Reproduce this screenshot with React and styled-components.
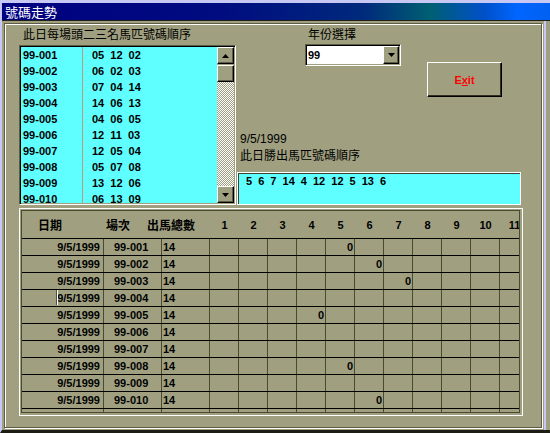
import React from 'react';
import styled, { createGlobalStyle } from 'styled-components';

const face = '#a0a080';
const cyan = '#60ffff';
const lavender = '#c8c8f4';
const shade = '#5c5c44';
const gridLine = '#4a4a30';

const GlobalStyle = createGlobalStyle`
  html, body { margin: 0; padding: 0; background: ${face}; }
  * { box-sizing: border-box; }
`;

const Window = styled.div`
  width: 550px;
  height: 433px;
  background: ${face};
  border-left: 2px solid ${lavender};
  border-top: 3px solid ${lavender};
  border-bottom: 3px solid #1c1c14;
  display: flex;
  flex-direction: column;
  overflow: hidden;
  font-family: "Liberation Sans", "Noto Sans CJK TC", sans-serif;
`;

const TitleBar = styled.div`
  height: 18px;
  flex-shrink: 0;
  border-bottom: 1px solid #202018;
  padding-left: 3px;
  color: #fff;
  font-family: "Noto Sans CJK TC", sans-serif;
  font-size: 13px;
  line-height: 17px;
  background: linear-gradient(90deg, #000080 0%, #000c80 40%, #002a7c 66%, #005f72 78%, #0050c8 88%, #0066ff 94%, #0060f0 100%);
`;

const Body = styled.div`
  width: 544px;
  flex: 1;
  padding: 2px 0 0 2px;
  border-right: 2px solid ${lavender};
`;

const GroupFrame = styled.div`
  width: 538px;
  height: 405px;
  border: 1px solid ${shade};
  box-shadow: inset 1px 1px 0 #fff, 1px 1px 0 #fff;
  display: flex;
  flex-direction: column;
`;

const TopSection = styled.div`
  display: flex;
  padding-left: 14px;
  height: 181px;
  flex-shrink: 0;
`;

const LeftCol = styled.div`
  width: 217px;
  display: flex;
  flex-direction: column;
`;

const RightCol = styled.div`
  width: 284px;
  margin-left: 1px;
  display: flex;
  flex-direction: column;
`;

const Label = styled.div`
  font-family: "Noto Sans CJK TC", sans-serif;
  font-size: 12px;
  line-height: ${p => p.$lh || 14}px;
  margin-top: ${p => p.$mt || 0}px;
  padding-left: ${p => p.$pl || 0}px;
  color: #000;
  white-space: nowrap;
`;

const DateLabel = styled(Label)`
  font-family: "Liberation Sans", sans-serif;
`;

const Sunken = styled.div`
  border: 1px solid;
  border-color: ${shade} #fff #fff ${shade};
  padding: 1px;
  box-shadow: inset 1px 1px 0 #000, inset -1px -1px 0 ${face};
`;

const ListBox = styled(Sunken)`
  width: 217px;
  height: 160px;
  margin-top: 4px;
  display: flex;
`;

const ListRows = styled.div`
  flex: 1;
  background: ${cyan};
  overflow: hidden;
`;

const ListRow = styled.div`
  height: 16px;
  display: flex;
  align-items: center;
  font-size: 11px;
  font-weight: bold;
  color: #000;
  word-spacing: 3px;
  white-space: pre;
`;

const ListId = styled.div`
  width: 62px;
  height: 100%;
  display: flex;
  align-items: center;
  padding-left: 2px;
  border-right: 1px solid #b89a78;
`;

const ListNums = styled.div`
  padding-left: 9px;
`;

const ScrollBar = styled.div`
  width: 17px;
  display: flex;
  flex-direction: column;
`;

const Raised = styled.div`
  background: ${face};
  border: 1px solid;
  border-color: #fff #000 #000 #fff;
  box-shadow: inset -1px -1px 0 ${shade};
  display: flex;
  align-items: center;
  justify-content: center;
`;

const ScrollBtn = styled(Raised)`
  height: 17px;
  flex-shrink: 0;
`;

const Track = styled.div`
  flex: 1;
  background-color: ${face};
  background-image: repeating-conic-gradient(#fff 0 25%, ${face} 0 50%);
  background-size: 2px 2px;
`;

const Arrow = ({ down }) => (
  <svg width="7" height="4" viewBox="0 0 7 4">
    <polygon points={down ? '0,0 7,0 3.5,4' : '0,4 7,4 3.5,0'} fill="#000" />
  </svg>
);

const TopRow = styled.div`
  display: flex;
  align-items: flex-start;
  height: 73px;
`;

const YearBlock = styled.div`
  margin-left: 68px;
  width: 96px;
  display: flex;
  flex-direction: column;
`;

const Combo = styled(Sunken)`
  width: 96px;
  height: 22px;
  margin-top: 3px;
  display: flex;
`;

const ComboField = styled.div`
  flex: 1;
  background: #fff;
  font-size: 11px;
  font-weight: bold;
  line-height: 18px;
  padding-left: 1px;
  color: #000;
`;

const ComboBtn = styled(Raised)`
  width: 16px;
`;

const ExitButton = styled(Raised)`
  width: 75px;
  height: 35px;
  margin-left: 26px;
  margin-top: 38px;
  color: #ff0000;
  font-size: 11px;
  font-weight: bold;
  box-shadow: inset -1px -1px 0 #303024;
  u { text-decoration: underline; }
`;

const ResultBox = styled.div`
  width: 284px;
  height: 33px;
  margin-top: 10px;
  background: ${cyan};
  border: 1px solid #fff;
  box-shadow: inset 1px 1px 0 #404030;
  padding: 2px 8px;
  font-size: 11px;
  font-weight: bold;
  line-height: 13px;
  word-spacing: 3px;
  white-space: pre;
  color: #000;
`;

const GridFrame = styled.div`
  margin: 3px 0 0 14px;
  width: 504px;
  height: 208px;
  border: 1px solid #fff;
  padding: 1px 2px 2px 1px;
`;

const Grid = styled.div`
  position: relative;
  height: 100%;
  border: 1px solid ${gridLine};
  overflow: hidden;
  font-size: 11px;
  font-weight: bold;
  color: #000;
`;

const HeadRow = styled.div`
  height: 28px;
  display: flex;
  align-items: center;
  border-bottom: 1px solid #000;
  white-space: nowrap;
`;

const HeadCell = styled.div`
  flex-shrink: 0;
  width: ${p => p.$w}px;
  padding-left: ${p => p.$pl || 0}px;
  text-align: ${p => p.$center ? 'center' : 'left'};
  font-family: ${p => p.$cjk ? '"Noto Sans CJK TC", sans-serif' : '"Liberation Sans", sans-serif'};
  font-size: ${p => p.$cjk ? 12 : 11}px;
`;

const Row = styled.div`
  height: 17px;
  display: flex;
  border-bottom: 1px solid #000;
  white-space: nowrap;
`;

const Cell = styled.div`
  flex-shrink: 0;
  width: ${p => p.$w}px;
  height: 100%;
  border-right: 1px solid ${gridLine};
  display: flex;
  align-items: center;
  justify-content: ${p => p.$align === 'right' ? 'flex-end' : 'flex-start'};
  padding-left: ${p => p.$pl || 0}px;
  padding-right: ${p => p.$pr || 0}px;
`;

const Caret = styled.div`
  position: absolute;
  left: 34px;
  top: 79px;
  width: 2px;
  height: 15px;
  background: #505040;
  border-right: 1px solid #fff;
`;

const listData = [
  ['99-001', '05 12 02'],
  ['99-002', '06 02 03'],
  ['99-003', '07 04 14'],
  ['99-004', '14 06 13'],
  ['99-005', '04 06 05'],
  ['99-006', '12 11 03'],
  ['99-007', '12 05 04'],
  ['99-008', '05 07 08'],
  ['99-009', '13 12 06'],
  ['99-010', '06 13 09'],
];

// column where the "0" mark sits for each race (0 = none)
const marks = [5, 6, 7, 0, 4, 0, 0, 5, 0, 6];
const numCols = [1, 2, 3, 4, 5, 6, 7, 8, 9, 10, 11];

const App = () => (
  <Window>
    <GlobalStyle />
    <TitleBar>號碼走勢</TitleBar>
    <Body>
      <GroupFrame>
        <TopSection>
          <LeftCol>
            <Label $mt={3} $pl={4}>此日每場頭二三名馬匹號碼順序</Label>
            <ListBox>
              <ListRows>
                {listData.map(([id, nums]) => (
                  <ListRow key={id}>
                    <ListId>{id}</ListId>
                    <ListNums>{nums}</ListNums>
                  </ListRow>
                ))}
              </ListRows>
              <ScrollBar>
                <ScrollBtn><Arrow /></ScrollBtn>
                <ScrollBtn style={{ marginTop: 1 }} />
                <Track />
                <ScrollBtn><Arrow down /></ScrollBtn>
              </ScrollBar>
            </ListBox>
          </LeftCol>
          <RightCol>
            <TopRow>
              <YearBlock>
                <Label $mt={3} $pl={3}>年份選擇</Label>
                <Combo>
                  <ComboField>99</ComboField>
                  <ComboBtn><Arrow down /></ComboBtn>
                </Combo>
              </YearBlock>
              <ExitButton>
                <span>E<u>x</u>it</span>
              </ExitButton>
            </TopRow>
            <DateLabel $mt={34} $lh={17} $pl={3}>9/5/1999</DateLabel>
            <Label $pl={3}>此日勝出馬匹號碼順序</Label>
            <ResultBox>{'5 6 7 14 4 12 12 5 13 6'}</ResultBox>
          </RightCol>
        </TopSection>
        <GridFrame>
          <Grid>
            <HeadRow>
              <HeadCell $w={82} $pl={16} $cjk>日期</HeadCell>
              <HeadCell $w={41} $pl={2} $cjk>場次</HeadCell>
              <HeadCell $w={65} $pl={2} $cjk>出馬總數</HeadCell>
              {numCols.map(n => (
                <HeadCell key={n} $w={29} $center>{n}</HeadCell>
              ))}
            </HeadRow>
            {[...listData, ['', '']].map(([id], i) => (
              <Row key={i}>
                <Cell $w={82} $align="right" $pr={3}>{id && '9/5/1999'}</Cell>
                <Cell $w={58} $pl={10}>{id}</Cell>
                <Cell $w={48} $pl={1}>{id && '14'}</Cell>
                {numCols.map(n => (
                  <Cell key={n} $w={29} $align="right" $pr={1}>
                    {marks[i] === n ? '0' : ''}
                  </Cell>
                ))}
              </Row>
            ))}
            <Caret />
          </Grid>
        </GridFrame>
      </GroupFrame>
    </Body>
  </Window>
);

export default App;
